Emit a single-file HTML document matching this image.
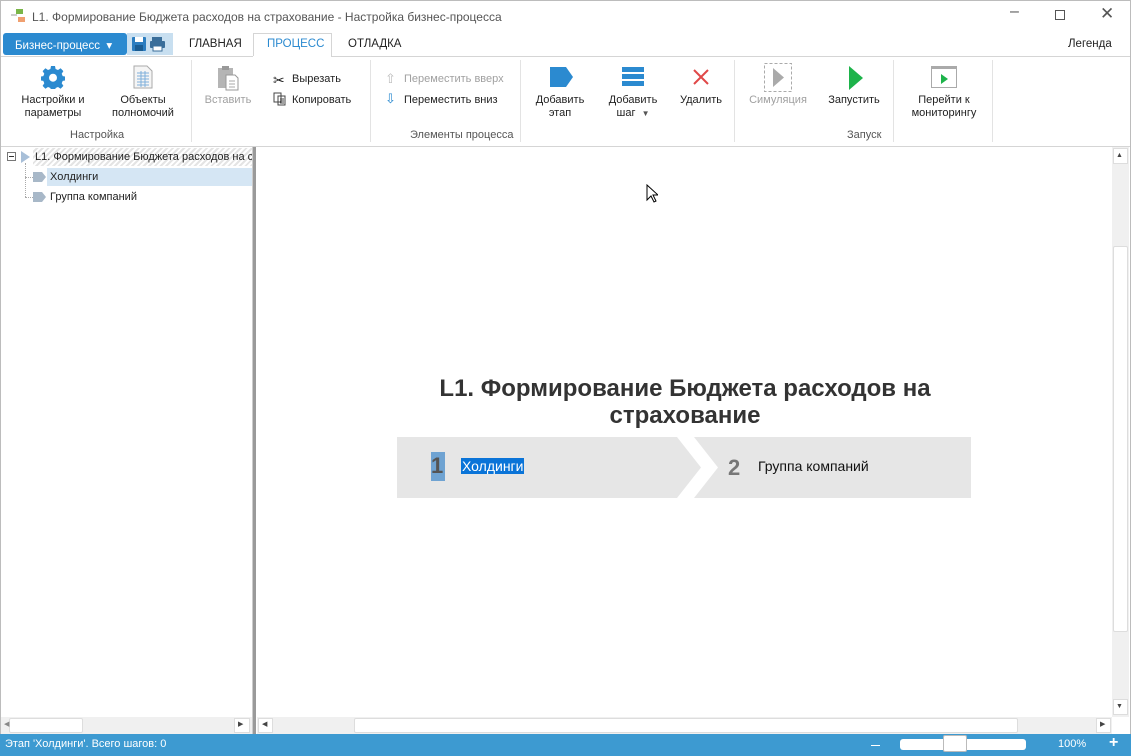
<!DOCTYPE html>
<html><head><meta charset="utf-8"><style>
*{box-sizing:border-box;margin:0;padding:0}
body{width:1131px;height:756px;overflow:hidden;background:#fff;font-family:"Liberation Sans",sans-serif;font-size:11px;color:#222;position:relative}
.a{position:absolute}
.t{position:absolute;white-space:nowrap}
.btn{position:absolute;text-align:center;line-height:13px;font-size:11px;color:#222}
.dis{color:#a0a0a0}
.glab{position:absolute;top:129px;font-size:11px;color:#555}
.sep{position:absolute;top:60px;width:1px;height:82px;background:#e3e3e3}
</style></head><body>
<div class="a" style="left:0;top:0;width:1131px;height:756px;border:1px solid #bcbcbc;border-bottom:none"></div>
<!-- title -->
<svg class="a" style="left:11px;top:9px" width="16" height="14"><rect x="5" y="0" width="7" height="5" fill="#7ab648"/><rect x="7" y="8" width="7" height="5" fill="#f0a070"/><path d="M0 6h6" stroke="#999"/></svg>
<div class="t" style="left:32px;top:10px;font-size:12px;color:#555">L1. Формирование Бюджета расходов на страхование - Настройка бизнес-процесса</div>
<div class="t" style="left:1010px;top:3px;font-size:16px;color:#555">&#8211;</div>
<div class="a" style="left:1055px;top:10px;width:10px;height:10px;border:1px solid #555"></div>
<div class="t" style="left:1100px;top:4px;font-size:17px;color:#555">&#10005;</div>
<!-- tabs -->
<div class="a" style="left:3px;top:33px;width:124px;height:22px;background:#2b8ad0;border-radius:3px"></div>
<div class="t" style="left:15px;top:38px;color:#fff;font-size:11.5px">Бизнес-процесс &nbsp;▾</div>
<div class="a" style="left:127px;top:33px;width:46px;height:22px;background:#c8dff0"></div>
<svg class="a" style="left:131px;top:36px" width="40" height="17"><rect x="1" y="1" width="14" height="14" rx="1" fill="#2b7dc0"/><rect x="4" y="1" width="8" height="5" fill="#fff"/><rect x="4" y="9" width="8" height="6" fill="#1a5c92"/><rect x="21" y="1" width="10" height="4" fill="#3a6e9a"/><rect x="19" y="5" width="15" height="7" rx="1" fill="#3a6e9a"/><rect x="22" y="10" width="9" height="5" fill="#fff" stroke="#3a6e9a"/></svg>
<div class="t" style="left:189px;top:38px;font-size:11.5px">ГЛАВНАЯ</div>
<div class="a" style="left:253px;top:33px;width:79px;height:24px;border:1px solid #d5d5d5;border-bottom:none;background:#fff"></div>
<div class="t" style="left:267px;top:38px;font-size:11.5px;color:#2b8ad0">ПРОЦЕСС</div>
<div class="t" style="left:348px;top:38px;font-size:11.5px">ОТЛАДКА</div>
<div class="t" style="left:1068px;top:38px;font-size:11.5px">Легенда</div>
<div class="a" style="left:1px;top:56px;width:1129px;height:1px;background:#d5d5d5"></div>
<div class="a" style="left:253px;top:56px;width:78px;height:1px;background:#fff"></div>
<!-- ribbon -->
<svg class="a" style="left:41px;top:65px" width="24" height="24" viewBox="0 0 24 24"><path fill="#2b8ad0" d="M10 1h4l.6 3 2.4 1 2.6-1.7 2.8 2.8L20.7 8.7l1 2.4 3 .6v3.6l-3 .6-1 2.4 1.7 2.6-2.8 2.8-2.6-1.7-2.4 1-.6 3h-4l-.6-3-2.4-1-2.6 1.7-2.8-2.8 1.7-2.6-1-2.4-3-.6v-3.6l3-.6 1-2.4L1.6 6.1 4.4 3.3 7 5l2.4-1z"/><circle cx="12" cy="12.7" r="4" fill="#fff"/></svg>
<div class="btn" style="left:12px;top:94px;width:82px">Настройки и<br>параметры</div>
<svg class="a" style="left:133px;top:65px" width="20" height="24"><path d="M1 1h13l5 5v17H1z" fill="#f5f5f5" stroke="#aaa"/><path d="M4 8h12M4 11h12M4 14h12M4 17h12M4 20h12M8 6v16M12 6v16" stroke="#7fb0da"/></svg>
<div class="btn" style="left:100px;top:94px;width:86px">Объекты<br>полномочий</div>
<div class="glab" style="left:70px">Настройка</div>
<div class="sep" style="left:191px"></div>
<svg class="a" style="left:217px;top:65px" width="22" height="26"><rect x="1" y="3" width="15" height="20" fill="#b5b5b5"/><rect x="5" y="1" width="7" height="4" fill="#999"/><path d="M9 10h9l3 3v12H9z" fill="#fff" stroke="#999"/><path d="M12 16h6M12 19h6M12 22h6" stroke="#aaa"/></svg>
<div class="btn dis" style="left:198px;top:94px;width:60px">Вставить</div>
<div class="t" style="left:273px;top:72px;font-size:14px">✂</div>
<div class="t" style="left:292px;top:73px">Вырезать</div>
<svg class="a" style="left:273px;top:92px" width="14" height="14"><path d="M1 1h7v9H1zM5 4h7v9H5z" fill="#fff" stroke="#444"/><path d="M7 7h4M7 9h4M7 11h4" stroke="#444"/></svg>
<div class="t" style="left:292px;top:94px">Копировать</div>
<div class="sep" style="left:370px"></div>
<div class="t dis" style="left:385px;top:71px;font-size:13px;color:#bbb">⇧</div>
<div class="t dis" style="left:404px;top:73px">Переместить вверх</div>
<div class="t" style="left:385px;top:91px;font-size:13px;color:#2b8ad0">⇩</div>
<div class="t" style="left:404px;top:94px">Переместить вниз</div>
<div class="glab" style="left:410px">Элементы процесса</div>
<div class="sep" style="left:520px"></div>
<svg class="a" style="left:550px;top:67px" width="24" height="20"><path d="M0 0h16l7 10-7 10H0z" fill="#2b8ad0"/></svg>
<div class="btn" style="left:527px;top:94px;width:66px">Добавить<br>этап</div>
<svg class="a" style="left:622px;top:67px" width="22" height="20"><rect width="22" height="5" fill="#2b8ad0"/><rect y="7" width="22" height="5" fill="#2b8ad0"/><rect y="14" width="22" height="5" fill="#2b8ad0"/></svg>
<div class="btn" style="left:600px;top:94px;width:66px">Добавить<br>шаг &nbsp;<span style="font-size:8px;color:#555">▼</span></div>
<svg class="a" style="left:692px;top:68px" width="18" height="18"><path d="M2 2l14 14M16 2L2 16" stroke="#e04848" stroke-width="2"/></svg>
<div class="btn" style="left:675px;top:94px;width:52px">Удалить</div>
<div class="sep" style="left:734px"></div>
<svg class="a" style="left:764px;top:63px" width="28" height="29"><rect x="0.5" y="0.5" width="27" height="28" fill="none" stroke="#aaa" stroke-dasharray="3,2"/><path d="M9 5l11 9.5L9 24z" fill="#aaa"/></svg>
<div class="btn dis" style="left:742px;top:94px;width:72px">Симуляция</div>
<svg class="a" style="left:848px;top:66px" width="16" height="24"><path d="M1 0l14 12L1 24z" fill="#1db34a"/></svg>
<div class="btn" style="left:822px;top:94px;width:64px">Запустить</div>
<div class="glab" style="left:847px">Запуск</div>
<div class="sep" style="left:893px"></div>
<svg class="a" style="left:931px;top:66px" width="26" height="22"><rect x="0.5" y="0.5" width="25" height="21" fill="#fff" stroke="#aaa"/><rect x="0" y="0" width="26" height="3" fill="#aaa"/><path d="M10 8l7 5-7 5z" fill="#1db34a"/></svg>
<div class="btn" style="left:900px;top:94px;width:88px">Перейти к<br>мониторингу</div>
<div class="sep" style="left:992px"></div>
<div class="a" style="left:1px;top:146px;width:1129px;height:1px;background:#d5d5d5"></div>
<!-- left tree -->
<div class="a" style="left:33px;top:148px;width:219px;height:18px;background:repeating-linear-gradient(135deg,#fff 0 2px,#e4e4e4 2px 4px)"></div>
<div class="a" style="left:7px;top:152px;width:9px;height:9px;border:1px solid #777;background:#fff"></div>
<div class="a" style="left:9px;top:156px;width:5px;height:1px;background:#333"></div>
<svg class="a" style="left:21px;top:151px" width="10" height="12"><path d="M0 0l9 6-9 6z" fill="#a8bfd8"/></svg>
<div class="t" style="left:35px;top:151px">L1. Формирование Бюджета расходов на с</div>
<div class="a" style="left:25px;top:163px;width:1px;height:34px;border-left:1px dotted #aaa"></div>
<div class="a" style="left:25px;top:177px;width:8px;border-top:1px dotted #aaa"></div>
<div class="a" style="left:25px;top:197px;width:8px;border-top:1px dotted #aaa"></div>
<div class="a" style="left:47px;top:168px;width:205px;height:18px;background:#d5e6f4"></div>
<svg class="a" style="left:33px;top:172px" width="13" height="10"><path d="M0 0h9l4 5-4 5H0z" fill="#a8b8c8"/></svg>
<div class="t" style="left:50px;top:171px">Холдинги</div>
<svg class="a" style="left:33px;top:192px" width="13" height="10"><path d="M0 0h9l4 5-4 5H0z" fill="#a8b8c8"/></svg>
<div class="t" style="left:50px;top:191px">Группа компаний</div>
<!-- splitter -->
<div class="a" style="left:252px;top:147px;width:4px;height:587px;background:#9a9a9a;border-left:1px solid #ccc"></div>
<!-- left hscroll -->
<div class="a" style="left:1px;top:717px;width:251px;height:17px;background:#f0f0f0"></div>
<div class="a" style="left:9px;top:718px;width:74px;height:15px;background:#fff;border:1px solid #ddd;border-radius:2px"></div>
<div class="t" style="left:4px;top:720px;font-size:7px;color:#888">◀</div>
<div class="a" style="left:234px;top:718px;width:16px;height:15px;background:#fff;border:1px solid #ddd"></div>
<div class="t" style="left:238px;top:720px;font-size:7px;color:#444">▶</div>
<!-- main canvas -->
<div class="t" style="left:257px;top:375px;width:856px;text-align:center;font-size:24px;font-weight:bold;color:#333;line-height:27px">L1. Формирование Бюджета расходов на<br>страхование</div>
<svg class="a" style="left:397px;top:437px" width="574" height="61"><path d="M0 0h280l24 30.5-24 30.5H0z" fill="#e6e6e6"/><path d="M297 0h277v61H297l24-30.5z" fill="#e6e6e6"/></svg>
<div class="a" style="left:431px;top:452px;width:14px;height:29px;background:#6fa3d2"></div>
<div class="t" style="left:431px;top:453px;font-size:22px;font-weight:bold;color:#555">1</div>
<div class="t" style="left:461px;top:458px;font-size:14px;background:#0a74d8;color:#fff;padding:0 1px">Холдинги</div>
<div class="t" style="left:728px;top:455px;font-size:22px;font-weight:bold;color:#777">2</div>
<div class="t" style="left:758px;top:458px;font-size:14px;color:#111">Группа компаний</div>
<svg class="a" style="left:646px;top:184px" width="12" height="19"><path d="M1 1v15l4-4 3 6 2-1-3-6h5z" fill="#fff" stroke="#000"/></svg>
<!-- vscroll -->
<div class="a" style="left:1112px;top:147px;width:17px;height:570px;background:#f0f0f0"></div>
<div class="a" style="left:1113px;top:148px;width:15px;height:16px;background:#fff;border:1px solid #ddd"></div>
<div class="t" style="left:1116px;top:152px;font-size:7px;color:#444">▲</div>
<div class="a" style="left:1113px;top:246px;width:15px;height:386px;background:#fff;border:1px solid #ddd;border-radius:2px"></div>
<div class="a" style="left:1113px;top:699px;width:15px;height:16px;background:#fff;border:1px solid #ddd"></div>
<div class="t" style="left:1116px;top:703px;font-size:7px;color:#444">▼</div>
<!-- main hscroll -->
<div class="a" style="left:257px;top:717px;width:855px;height:17px;background:#f0f0f0"></div>
<div class="a" style="left:258px;top:718px;width:15px;height:15px;background:#fff;border:1px solid #ddd"></div>
<div class="t" style="left:262px;top:720px;font-size:7px;color:#444">◀</div>
<div class="a" style="left:354px;top:718px;width:664px;height:15px;background:#fff;border:1px solid #ddd;border-radius:2px"></div>
<div class="a" style="left:1096px;top:718px;width:15px;height:15px;background:#fff;border:1px solid #ddd"></div>
<div class="t" style="left:1100px;top:720px;font-size:7px;color:#444">▶</div>
<!-- status -->
<div class="a" style="left:0;top:734px;width:1131px;height:22px;background:#3d9ad1"></div>
<div class="t" style="left:5px;top:738px;color:#fff;font-size:11px">Этап 'Холдинги'. Всего шагов: 0</div>
<div class="a" style="left:871px;top:745px;width:9px;height:1px;background:#fff"></div>
<div class="a" style="left:900px;top:739px;width:126px;height:11px;background:#fff;border-radius:3px"></div>
<div class="a" style="left:943px;top:735px;width:24px;height:17px;background:#fff;border:1px solid #bbb;border-radius:2px"></div>
<div class="t" style="left:1058px;top:738px;color:#fff;font-size:11px">100%</div>
<div class="t" style="left:1109px;top:734px;color:#fff;font-size:16px;font-weight:bold">+</div>
</body></html>
